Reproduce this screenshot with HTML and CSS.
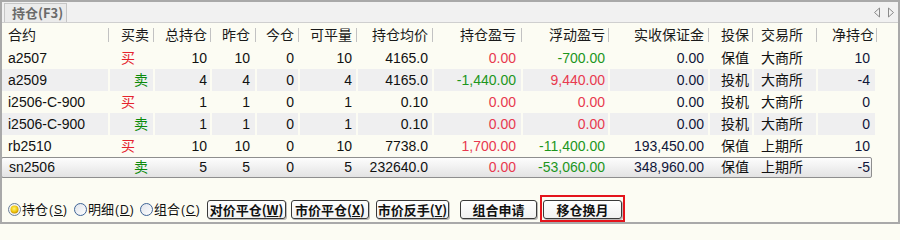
FILE: index.html
```html
<!DOCTYPE html>
<html lang="zh-CN">
<head>
<meta charset="utf-8">
<title>持仓</title>
<link rel="stylesheet" href="styles.css">
</head>
<body>
<div class="panel">
  <div class="tabbar">
    <div class="tab">持仓(F3)</div>
    <svg class="arrows" width="22" height="11" viewBox="0 0 22 11">
      <polygon points="5.5,1 0.5,5.5 5.5,10" fill="none" stroke="#8a8a8a" stroke-width="1"/>
      <polygon points="14.5,1 19.5,5.5 14.5,10" fill="none" stroke="#8a8a8a" stroke-width="1"/>
    </svg>
  </div>

  <div class="row head">
    <div>合约</div><div>买卖</div><div>总持仓</div><div>昨仓</div><div>今仓</div><div>可平量</div><div>持仓均价</div><div>持仓盈亏</div><div>浮动盈亏</div><div>实收保证金</div><div>投保</div><div>交易所</div><div>净持仓</div>
  </div>

  <div class="row">
    <div>a2507</div><div class="buy">买</div><div>10</div><div>10</div><div>0</div><div>10</div><div>4165.0</div><div class="red">0.00</div><div class="green">-700.00</div><div class="navy">0.00</div><div>保值</div><div>大商所</div><div class="navy">10</div>
  </div>
  <div class="row alt">
    <div>a2509</div><div class="sell">卖</div><div>4</div><div>4</div><div>0</div><div>4</div><div>4165.0</div><div class="green">-1,440.00</div><div class="red">9,440.00</div><div class="navy">0.00</div><div>投机</div><div>大商所</div><div class="navy">-4</div>
  </div>
  <div class="row">
    <div>i2506-C-900</div><div class="buy">买</div><div>1</div><div>1</div><div>0</div><div>1</div><div>0.10</div><div class="red">0.00</div><div class="red">0.00</div><div class="navy">0.00</div><div>投机</div><div>大商所</div><div class="navy">0</div>
  </div>
  <div class="row alt">
    <div>i2506-C-900</div><div class="sell">卖</div><div>1</div><div>1</div><div>0</div><div>1</div><div>0.10</div><div class="red">0.00</div><div class="red">0.00</div><div class="navy">0.00</div><div>投机</div><div>大商所</div><div class="navy">0</div>
  </div>
  <div class="row">
    <div>rb2510</div><div class="buy">买</div><div>10</div><div>10</div><div>0</div><div>10</div><div>7738.0</div><div class="red">1,700.00</div><div class="green">-11,400.00</div><div class="navy">193,450.00</div><div>保值</div><div>上期所</div><div class="navy">10</div>
  </div>
  <div class="row sel">
    <div>sn2506</div><div class="sell">卖</div><div>5</div><div>5</div><div>0</div><div>5</div><div>232640.0</div><div class="red">0.00</div><div class="green">-53,060.00</div><div class="navy">348,960.00</div><div>保值</div><div>上期所</div><div class="navy">-5</div>
  </div>

  <div class="bottombar">
    <label class="radio r1">
      <svg width="13" height="13" viewBox="0 0 13 13">
        <defs>
          <radialGradient id="yel" cx="0.45" cy="0.4" r="0.6">
            <stop offset="0" stop-color="#fff27a"/>
            <stop offset="0.6" stop-color="#f2cc12"/>
            <stop offset="1" stop-color="#c99300"/>
          </radialGradient>
        </defs>
        <circle cx="6.5" cy="6.5" r="6" fill="#f4f4f4" stroke="#6a7f98"/>
        <circle cx="6.5" cy="6.5" r="4" fill="url(#yel)"/>
      </svg>
      <span>持仓<span class="p">(<u>S</u>)</span></span>
    </label>
    <label class="radio r2">
      <svg width="13" height="13" viewBox="0 0 13 13">
        <defs>
          <linearGradient id="wh" x1="0" y1="0" x2="1" y2="1">
            <stop offset="0" stop-color="#dfe3ea"/>
            <stop offset="1" stop-color="#ffffff"/>
          </linearGradient>
        </defs>
        <circle cx="6.5" cy="6.5" r="6" fill="url(#wh)" stroke="#3f6496"/>
      </svg>
      <span>明细<span class="p">(<u>D</u>)</span></span>
    </label>
    <label class="radio r3">
      <svg width="13" height="13" viewBox="0 0 13 13">
        <circle cx="6.5" cy="6.5" r="6" fill="url(#wh)" stroke="#3f6496"/>
      </svg>
      <span>组合<span class="p">(<u>C</u>)</span></span>
    </label>
    <button class="btn b1">对价平仓(<u>W</u>)</button>
    <button class="btn b2">市价平仓(<u>X</u>)</button>
    <button class="btn b3">市价反手(<u>Y</u>)</button>
    <button class="btn b4">组合申请</button>
    <span class="mark"><button class="btn b5">移仓换月</button></span>
  </div>
</div>
</body>
</html>
```

FILE: styles.css
```css
html, body {
  margin: 0;
  padding: 0;
  width: 900px;
  height: 224px;
  overflow: hidden;
  background: #fcfcf3;
}

.panel {
  width: 900px;
  height: 224px;
  box-sizing: border-box;
  border: 2px solid #a9a9a9;
  background: #fcfcf3;
  display: flex;
  flex-direction: column;
  font-family: "Liberation Sans", "Noto Sans CJK SC", sans-serif;
  font-size: 14px;
  color: #111;
  overflow: hidden;
}

/* tab strip */
.tabbar {
  height: 20px;
  flex: none;
  display: flex;
  align-items: flex-end;
  background: #f1f1f1;
  border-bottom: 1px solid #cfcfcf;
}

.tab {
  margin-left: 2px;
  width: 63px;
  height: 19px;
  box-sizing: border-box;
  border: 1px solid #c6c6c6;
  border-bottom: none;
  background: #ebebeb;
  color: #6a6a6a;
  font-family: "Noto Sans CJK SC", sans-serif;
  font-weight: bold;
  font-size: 13px;
  line-height: 18px;
  padding-left: 7px;
}

.arrows {
  margin-left: auto;
  margin-right: 2px;
  align-self: center;
}

/* table grid */
.row {
  display: grid;
  grid-template-columns: 108px 45px 57px 45px 43px 58px 76px 89px 87px 100px 44px 64px 59px;
  height: 22px;
  flex: none;
  line-height: 22px;
  white-space: nowrap;
}

.row > div {
  border-right: 2px solid transparent;
  background-clip: padding-box;
  text-align: right;
  font-family: "Liberation Sans", "Noto Sans CJK SC", sans-serif;
}

.row > div:nth-child(1) { text-align: left; padding-left: 6px; }
.row > div:nth-child(2) { text-align: left; padding-left: 11px; }
.row > div:nth-child(3) { padding-right: 3px; }
.row > div:nth-child(4) { padding-right: 5px; }
.row > div:nth-child(5) { padding-right: 4px; }
.row > div:nth-child(6) { padding-right: 4px; }
.row > div:nth-child(7) { padding-right: 4px; }
.row > div:nth-child(8) { padding-right: 5px; }
.row > div:nth-child(9) { padding-right: 3px; }
.row > div:nth-child(10) { padding-right: 4px; }
.row > div:nth-child(11) { text-align: left; padding-left: 11px; }
.row > div:nth-child(12) { text-align: left; padding-left: 7px; }
.row > div:nth-child(13) { padding-right: 5px; }

.row > div.sell { text-align: right; padding-left: 0; padding-right: 5px; }

.head {
  height: 24px;
  line-height: 24px;
  color: #1a1a1a;
}

.head > div {
  background-image: linear-gradient(#c2c2c2, #c2c2c2);
  background-repeat: no-repeat;
  background-origin: border-box;
  background-clip: border-box;
  background-position: right 1px center;
  background-size: 1px 14px;
}

.head > div:nth-child(13) { padding-right: 1px; background-position: right 0 center; }

.alt > div {
  background-color: #efeff0;
}

.sel {
  height: 21px;
  line-height: 19px;
  box-sizing: border-box;
  width: 871px;
  border: 1px solid #8e8e8e;
  border-radius: 2px;
  background: linear-gradient(#fdfdfd, #e3e3e3);
  margin-left: -1px;
}

.sel > div:nth-child(1) { padding-left: 7px; }

.buy { color: #e5232d; }
.sell { color: #0a8a0a; }
.red { color: #e8394f; }
.green { color: #1d961d; }
.navy { color: #10163a; }

/* bottom controls */
.bottombar {
  flex: 1;
  display: flex;
  align-items: flex-end;
  padding-left: 6px;
}

.radio {
  display: flex;
  align-items: center;
  height: 19px;
  margin-bottom: 3px;
  gap: 1px;
  font-family: "Noto Sans CJK SC", sans-serif;
  font-size: 13px;
  line-height: 19px;
  color: #111;
  white-space: nowrap;
}

.radio .p { font-family: "Liberation Sans", sans-serif; font-size: 12px; letter-spacing: 1px; margin-left: 1px; }

.radio u { text-decoration: underline; text-underline-offset: 1px; }

.r1 { width: 66px; }
.r2 { width: 66px; }
.r3 { width: 67px; }

.btn {
  height: 19px;
  box-sizing: border-box;
  margin: 0 0 3px 0;
  padding: 0;
  border: 1px solid #3a3a3a;
  border-radius: 3px;
  background: linear-gradient(#ffffff, #f1f1f1);
  box-shadow: 1px 1px 0 #b9b9b9;
  font-family: "Noto Sans CJK SC", sans-serif;
  font-weight: bold;
  font-size: 13px;
  line-height: 17px;
  color: #111;
  text-align: center;
  white-space: nowrap;
}

.b1 { width: 79px; margin-right: 5px; }
.b2 { width: 78px; margin-right: 7px; }
.b3 { width: 73px; margin-right: 11px; }
.b4 { width: 77px; margin-right: 3px; }
.b5 { width: 79px; margin: 0; display: block; }

.mark {
  display: block;
  border: 2px solid #e4141b;
  padding: 3px 1px 1px 1px;
}
```
